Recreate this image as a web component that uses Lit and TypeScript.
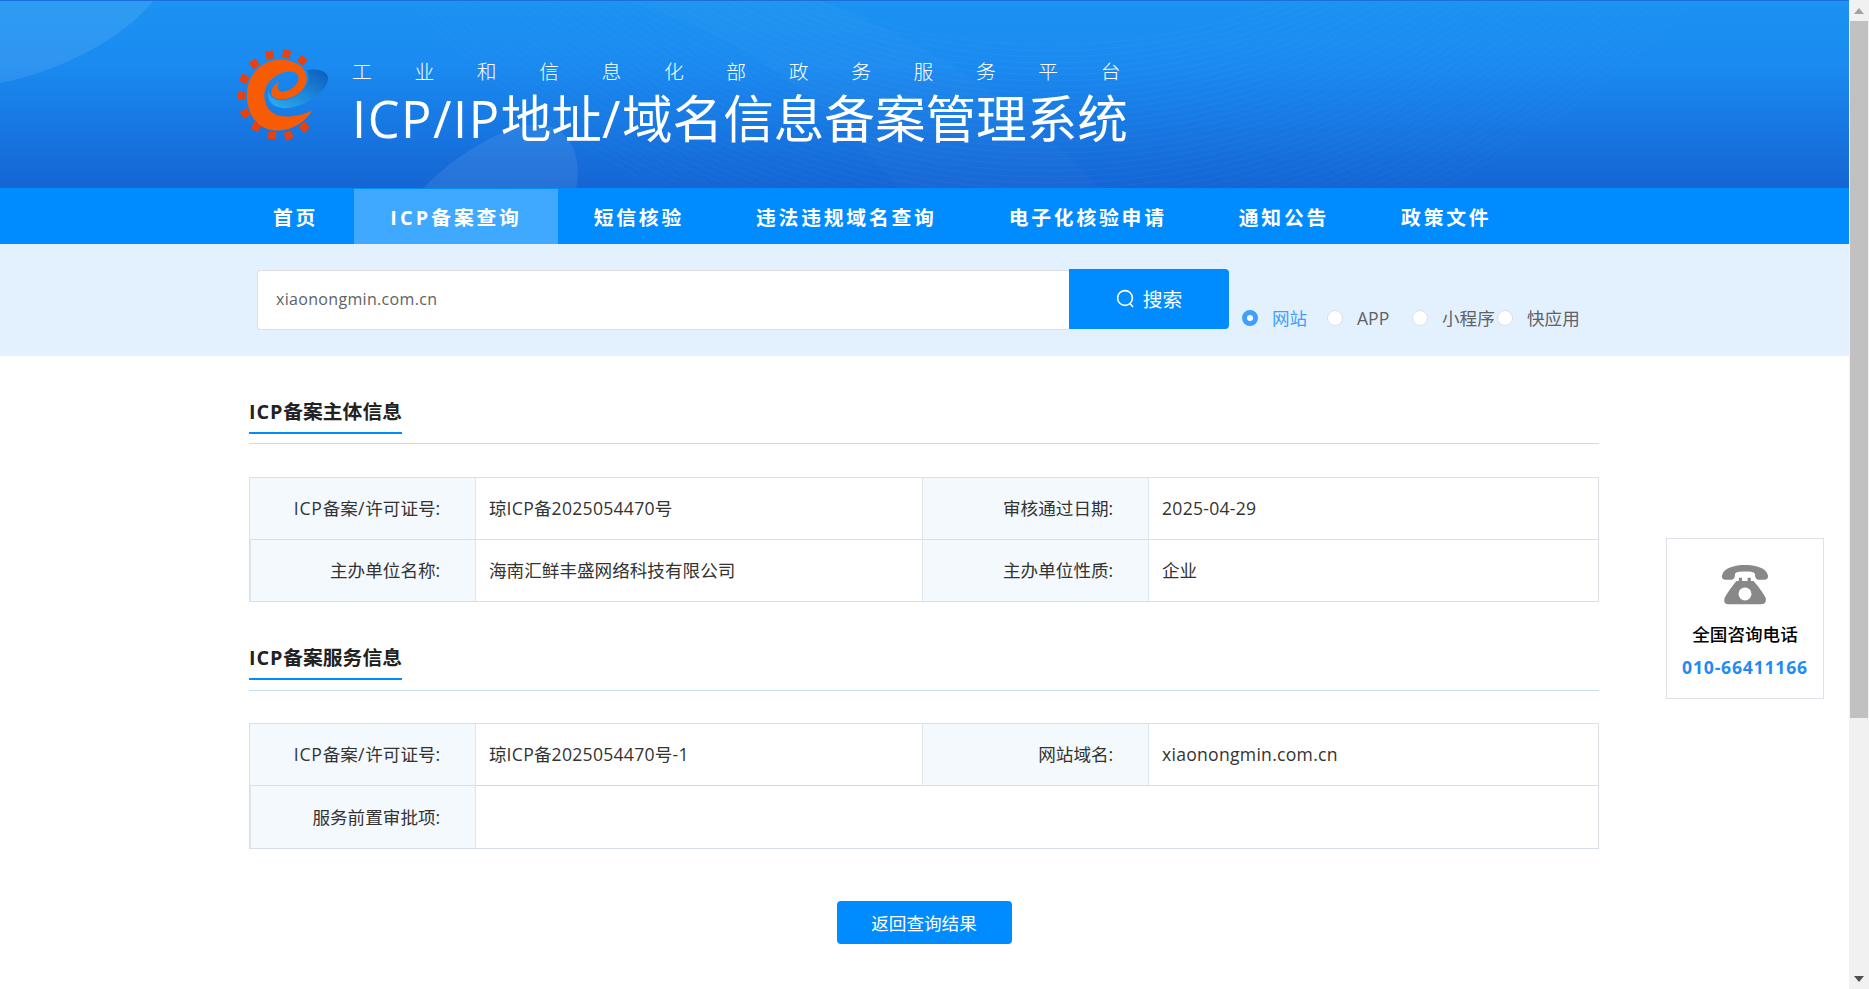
import { LitElement, html, css, svg } from "lit";
import { customElement } from "lit/decorators.js";

const NAV = ["首页", "ICP备案查询", "短信核验", "违法违规域名查询", "电子化核验申请", "通知公告", "政策文件"];
const RADIOS = ["网站", "APP", "小程序", "快应用"];
const SUBTITLE = "工业和信息化部政务服务平台";

// squares of the gear round the logo, in zoomed-crop coordinates
const TEETH = [
  [150, 103], [201, 100], [249, 120], [103, 130], [72, 176], [62, 228],
  [75, 281], [108, 322], [157, 347], [207, 348], [255, 323],
];

const rings = Array.from({ length: 40 }, (_, i) => 644 + i * 6);

// latin runs sit a little wider than the installed font sets them
const t = (s: string) =>
  s.split(/([\x21-\x7e]+)/).map((p, i) => (i % 2 ? html`<span class="lat">${p}</span>` : p));

@customElement("app-root")
export class AppRoot extends LitElement {
  static styles = css`
    :host {
      display: block;
      height: 989px;
      overflow: hidden;
      position: relative;
      font-family: "Open Sans", "Noto Sans CJK SC", sans-serif;
      color: #333;
      background: #fff;
    }
    .lat {
      letter-spacing: var(--lat, 0.015em);
    }
    .shell {
      display: flex;
      height: 989px;
    }
    .page {
      flex: 1;
      min-width: 0;
    }
    .header {
      height: 188px;
      position: relative;
      overflow: hidden;
      background: linear-gradient(180deg, #1a93f2 0%, #1a8af0 35%, #1565d4 100%);
      border-top: 1px solid #1a6fdc;
      box-sizing: border-box;
    }
    .decor {
      position: absolute;
      left: 0;
      top: 0;
    }
    .wrap {
      width: 1375px;
      margin: 0 auto;
    }
    .brand {
      position: relative;
      display: flex;
      align-items: flex-start;
      padding-top: 48px;
      gap: 23px;
    }
    .logo {
      width: 92px;
      height: 92px;
      flex: none;
    }
    .titles {
      display: flex;
      flex-direction: column;
      color: #fff;
      padding-top: 10px;
    }
    .sub {
      display: flex;
      font-size: 19.8px;
      line-height: 26px;
      font-weight: 300;
    }
    .sub span {
      width: 62.4px;
      flex: none;
    }
    .title {
      --lat: 0.03em;
      font-size: 50.6px;
      line-height: 60px;
      font-weight: 400;
      white-space: nowrap;
      margin-top: 4px;
    }
    .nav {
      height: 56px;
      background: #008cff;
    }
    .nav .wrap {
      display: flex;
      height: 100%;
    }
    .nav a {
      --lat: 3.2px;
      display: flex;
      align-items: center;
      padding: 0 36px;
      color: #fff;
      font-size: 19.8px;
      font-weight: 700;
      letter-spacing: 2.8px;
      white-space: nowrap;
    }
    .nav a.on {
      background: #3fa9ff;
      margin-top: 1px;
    }
    .search {
      height: 112px;
      background: #e3f1ff;
      box-sizing: border-box;
      padding: 25px 0 0 257px;
      display: flex;
      align-items: flex-start;
    }
    .input {
      width: 812px;
      height: 60px;
      margin-top: 1px;
      box-sizing: border-box;
      background: #fff;
      border: 1px solid #dcdfe6;
      border-right: none;
      border-radius: 4px 0 0 4px;
      padding: 0 0 2px 18px;
      display: flex;
      align-items: center;
      font-size: 16px;
      letter-spacing: 0.02em;
      color: #606266;
    }
    .go {
      width: 160px;
      height: 60px;
      box-sizing: border-box;
      padding-bottom: 2px;
      background: #008cff;
      border-radius: 0 4px 4px 0;
      color: #fff;
      font-size: 19.8px;
      display: flex;
      align-items: center;
      justify-content: center;
      gap: 8px;
    }
    .radios {
      display: flex;
      margin: 37px 0 0 13px;
    }
    .radio {
      width: 85px;
      display: flex;
      align-items: center;
      gap: 14px;
      font-size: 17.6px;
      line-height: 24px;
      color: #606266;
      white-space: nowrap;
    }
    .radio i {
      width: 16px;
      height: 16px;
      box-sizing: border-box;
      flex: none;
      border-radius: 50%;
      border: 1px solid #dcdfe6;
      background: #fff;
    }
    .radio.on {
      color: #409eff;
    }
    .radio.on i {
      border: 5px solid #409eff;
    }
    .main {
      width: 1350px;
      margin-left: 249px;
      padding-top: 44px;
    }
    .head {
      --lat: 0.045em;
      border-bottom: 1px solid #c6dcf0;
      height: 44px;
      box-sizing: border-box;
    }
    .head > span {
      display: inline-block;
      height: 32px;
      font-size: 19.8px;
      font-weight: 700;
      line-height: 24px;
      color: #222;
      border-bottom: 2px solid #008cff;
    }
    .grid {
      display: grid;
      grid-template-columns: 226px 446px 227px 1fr;
      grid-template-rows: 61px 62px;
      margin: 33px 0 0;
      border: 1px solid #dcdfe6;
      border-bottom-color: #d9dfe8;
      font-size: 17.6px;
    }
    .grid + .head {
      margin-top: 44px;
      height: 45px;
    }
    .grid + .head + .grid {
      margin-top: 32px;
      grid-template-rows: 61px 63px;
    }
    .cell {
      display: flex;
      align-items: center;
      padding: 0 0 2px 13px;
      box-sizing: border-box;
      border-top: 1px solid #d3e1f0;
      white-space: pre;
    }
    .cell.first {
      border-top: none;
    }
    .label {
      --lat: 0.045em;
      justify-content: flex-end;
      padding: 0 34px 2px 0;
      background: #f4f9fe;
      border-left: 1px solid #dde5ee;
      border-right: 1px solid #dde5ee;
    }
    .label:first-child {
      border-left: none;
    }
    .wide {
      grid-column: 2 / 5;
    }
    .marked {
      box-shadow: 0 1px 0 #c6dcf0;
      position: relative;
    }
    .foot {
      display: flex;
      justify-content: center;
      margin-top: 52px;
    }
    .back {
      width: 175px;
      height: 43px;
      background: #008cff;
      border-radius: 4px;
      color: #fff;
      font-size: 17.6px;
      display: flex;
      align-items: center;
      justify-content: center;
    }
    .side {
      position: absolute;
      left: 1666px;
      top: 538px;
      width: 158px;
      height: 161px;
      box-sizing: border-box;
      border: 1px solid #dfe0ea;
      background: #fff;
      display: flex;
      flex-direction: column;
      align-items: center;
      padding-top: 25px;
    }
    .side svg {
      width: 48px;
      height: 41px;
    }
    .side b {
      margin-top: 17px;
      font-size: 17.6px;
      line-height: 24px;
      font-weight: 500;
      color: #000;
    }
    .side strong {
      margin-top: 9px;
      font-size: 17.6px;
      line-height: 24px;
      font-weight: 700;
      letter-spacing: 0.045em;
      color: #1e8cf8;
    }
    .bar {
      width: 20px;
      flex: none;
      background: #f1f1f1;
      display: flex;
      flex-direction: column;
      align-items: center;
    }
    .bar .up,
    .bar .down {
      height: 21px;
      flex: none;
      display: flex;
      align-items: center;
      justify-content: center;
    }
    .bar .thumb {
      width: 18px;
      height: 697px;
      flex: none;
      background: #c1c1c1;
    }
    .bar .gap {
      flex: 1;
    }
  `;

  logo() {
    return html`<svg class="logo" viewBox="50 85 280 280">
      <defs>
        <linearGradient id="sw" x1="1" y1="0" x2="0" y2="1">
          <stop offset="0" stop-color="#0b5cbd" />
          <stop offset="1" stop-color="#2cb0f2" />
        </linearGradient>
      </defs>
      ${TEETH.map(([x, y]) => {
        const a = (Math.atan2(y - 225, x - 165) * 180) / Math.PI;
        return svg`<rect x=${x - 12} y=${y - 12} width="24" height="24" fill="#e9400c" transform="rotate(${a} ${x} ${y})" />`;
      })}
      <path
        fill="url(#sw)"
        d="M262 150C300 142 330 155 327 178C322 215 260 262 200 265C160 267 140 245 145 213C150 235 175 245 200 240C235 233 265 205 268 175C268 165 266 155 262 150Z"
      />
      <path
        fill="#f75c05"
        d="M278 272C250 320 200 335 165 333C110 330 80 280 80 225C80 165 125 118 180 118C230 118 265 145 262 180C258 215 215 240 180 238C165 237 150 228 155 212C158 200 168 190 178 184C170 200 172 215 190 215C210 215 238 195 238 172C236 155 215 150 195 155C160 165 135 190 133 225C133 260 155 288 190 290C220 292 255 285 278 272Z"
      />
    </svg>`;
  }

  row(cells: [string, string, string?, string?], first = false, marked = false) {
    const f = first ? "first" : "";
    if (cells.length === 2) {
      return html`<div class="cell label ${f}"><div>${t(cells[0])}</div></div>
        <div class="cell wide ${f}"><div>${t(cells[1])}</div></div>`;
    }
    return html`<div class="cell label ${f}"><div>${t(cells[0])}</div></div>
      <div class="cell ${f} ${marked ? "marked" : ""}"><div>${t(cells[1])}</div></div>
      <div class="cell label ${f}"><div>${t(cells[2]!)}</div></div>
      <div class="cell ${f}"><div>${t(cells[3]!)}</div></div>`;
  }

  render() {
    return html`<div class="shell">
      <div class="page">
        <div class="header">
          <svg class="decor" width="1849" height="188">
            <path d="M0 0H153C120 40 60 70 0 82Z" fill="#fff" fill-opacity=".09" />
            <path d="M422 188C470 140 520 120 545 124C580 132 580 170 576 188Z" fill="#fff" fill-opacity=".08" />
            <path d="M626 0C720 30 800 70 900 188H1100C1000 80 900 30 820 0Z" fill="#fff" fill-opacity=".02" />
            ${rings.map(
              (r) => svg`<circle cx="1050" cy="-600" r=${r} fill="none" stroke="#fff" stroke-opacity=".03" />`
            )}
          </svg>
          <div class="wrap brand">
            ${this.logo()}
            <div class="titles">
              <div class="sub">${[...SUBTITLE].map((c) => html`<span>${c}</span>`)}</div>
              <div class="title">${t("ICP/IP地址/域名信息备案管理系统")}</div>
            </div>
          </div>
        </div>
        <div class="nav">
          <div class="wrap">
            ${NAV.map((n, i) => html`<a class=${i === 1 ? "on" : ""}><div>${t(n)}</div></a>`)}
          </div>
        </div>
        <div class="search">
          <div class="input">xiaonongmin.com.cn</div>
          <div class="go">
            <svg width="19" height="19" viewBox="0 0 19 19" fill="none" stroke="#fff" stroke-width="1.6">
              <circle cx="9" cy="9" r="7.4" />
              <path d="M14 14.5L17 18" />
            </svg>
            搜索
          </div>
          <div class="radios">
            ${RADIOS.map(
              (r, i) => html`<div class="radio ${i === 0 ? "on" : ""}"><i></i><span>${r}</span></div>`
            )}
          </div>
        </div>
        <div class="main">
          <div class="head"><span>${t("ICP备案主体信息")}</span></div>
          <div class="grid">
            ${this.row(["ICP备案/许可证号:", "琼ICP备2025054470号", "审核通过日期:", "2025-04-29"], true)}
            ${this.row(["主办单位名称:", "海南汇鲜丰盛网络科技有限公司", "主办单位性质:", "企业"])}
          </div>
          <div class="head"><span>${t("ICP备案服务信息")}</span></div>
          <div class="grid">
            ${this.row(["ICP备案/许可证号:", "琼ICP备2025054470号-1", "网站域名:", "xiaonongmin.com.cn"], true, true)}
            ${this.row(["服务前置审批项:", ""])}
          </div>
          <div class="foot"><div class="back">返回查询结果</div></div>
        </div>
      </div>
      <div class="bar">
        <div class="up">
          <svg width="10" height="6" viewBox="0 0 10 6"><path d="M5 0L10 6H0Z" fill="#a3a3a3" /></svg>
        </div>
        <div class="thumb"></div>
        <div class="gap"></div>
        <div class="down">
          <svg width="10" height="6" viewBox="0 0 10 6"><path d="M5 6L10 0H0Z" fill="#505050" /></svg>
        </div>
      </div>
    </div>
    <div class="side">
      <svg viewBox="240 130 148 126">
        <path
          fill="#888"
          d="M243 165C250 140 285 133 313 133C345 133 378 140 385 165C386 175 380 178 372 178L355 178C348 178 345 172 345 163C345 155 335 153 313 153C292 153 283 155 283 163C283 172 280 178 272 178L255 178C247 178 242 175 243 165Z"
        />
        <path
          fill="#888"
          d="M295 172L305 172L305 182L322 182L322 172L332 172L332 182L340 182C345 185 375 225 378 235C380 248 375 254 365 254L262 254C252 254 248 248 251 235C255 225 280 190 288 182L295 182Z"
        />
        <circle cx="314" cy="222" r="20" fill="#fff" />
      </svg>
      <b>全国咨询电话</b>
      <strong>010-66411166</strong>
    </div>`;
  }
}
